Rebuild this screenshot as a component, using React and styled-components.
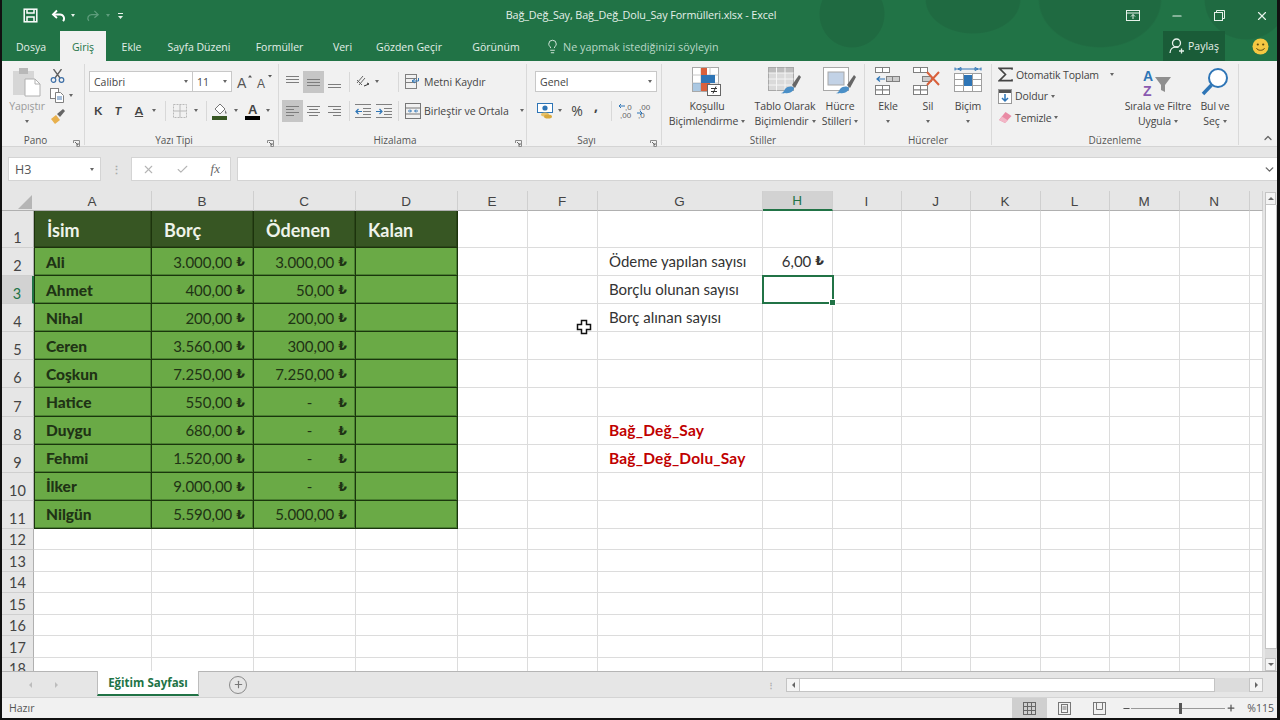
import React from 'react';
import styled, { createGlobalStyle } from 'styled-components';
import { ChevronDown, ChevronUp, Lightbulb, Plus, X, Check, Minus } from 'lucide-react';

const GlobalStyle = createGlobalStyle`
  html, body {
    margin: 0;
    padding: 0;
    width: 1280px;
    height: 720px;
    overflow: hidden;
    background: #000;
  }
`;

const UI_FONT = `'Open Sans', 'Noto Sans', sans-serif`;
const CELL_FONT = `Lato, 'DejaVu Sans', sans-serif`;
const GREEN = '#217346';

const Window = styled.div`
  width: 1280px;
  height: 720px;
  box-sizing: border-box;
  border-left: 2px solid #111;
  border-right: 3px solid #111;
  border-bottom: 2px solid #111;
  background: #e6e6e6;
  display: flex;
  flex-direction: column;
  overflow: hidden;
  font-family: ${UI_FONT};
  font-size: 11px;
  color: #444;
`;

/* title bar + tab strip share the leafy background */
const Head = styled.div`
  background-color: ${GREEN};
  background-image:
    radial-gradient(ellipse 33px 34px at 850px 14px, #1f6a41 97%, transparent 100%),
    radial-gradient(ellipse 48px 34px at 971px 0px, #1f6a41 97%, transparent 100%),
    radial-gradient(ellipse 62px 48px at 1098px 0px, #1f6a41 97%, transparent 100%),
    radial-gradient(ellipse 42px 40px at 1244px 0px, #1f6a41 97%, transparent 100%);
`;

const TitleBar = styled.div`
  height: 31px;
  display: grid;
  grid-template-columns: 1fr auto 1fr;
  align-items: center;
  color: #e4f0e9;
`;

const Qat = styled.div`
  display: flex;
  align-items: center;
  padding-left: 21px;
  gap: 5px;
`;

const TitleText = styled.div`
  font-size: 10.8px;
  letter-spacing: -0.1px;
  padding: 0 0 2px 3px;
`;

const WinControls = styled.div`
  display: flex;
  justify-content: flex-end;
  align-items: center;
  gap: 30px;
  padding-right: 8px;
`;

const TabStrip = styled.div`
  height: 30px;
  display: flex;
  align-items: stretch;
`;

const Tab = styled.div`
  width: ${(p) => p.$w}px;
  display: flex;
  align-items: center;
  justify-content: center;
  white-space: nowrap;
  font-size: 10.5px;
  padding-top: 1px;
  box-sizing: border-box;
  color: ${(p) => (p.$active ? GREEN : '#e2efe8')};
  background: ${(p) => (p.$active ? '#f1f1f1' : 'transparent')};
`;

const TellMe = styled.div`
  display: flex;
  align-items: center;
  gap: 1px;
  margin-left: 4px;
  color: #b9d8c6;
  font-size: 10.8px;
  white-space: nowrap;
  & > svg {
    margin-right: 2px;
  }
`;

const ShareBox = styled.div`
  margin-left: auto;
  width: 62px;
  display: flex;
  align-items: center;
  justify-content: center;
  gap: 3px;
  background: #1a5c38;
  color: #e6f1ea;
  font-size: 10.5px;
`;

const Smile = styled.div`
  width: 52px;
  display: flex;
  align-items: center;
  padding-left: 27px;
  box-sizing: border-box;
`;

const Ribbon = styled.div`
  height: 86px;
  box-sizing: border-box;
  background: #f1f1f1;
  border-bottom: 1px solid #d4d4d4;
  padding-top: 3px;
  display: flex;
  align-items: flex-start;
`;

const Group = styled.div`
  width: ${(p) => p.$w}px;
  height: 81px;
  flex: none;
  box-sizing: border-box;
  border-right: 1px solid #d9d9d9;
  display: flex;
  flex-direction: column;
`;

const GroupBody = styled.div`
  height: 68px;
  display: flex;
  padding-left: ${(p) => p.$pl || 0}px;
`;

const GroupFoot = styled.div`
  height: 13px;
  line-height: 17px;
  font-size: 10px;
  color: #555;
  display: grid;
  grid-template-columns: ${(p) => (p.$launcher ? '1fr auto 1fr 15px' : '1fr auto 1fr')};
`;

const Launcher = styled.svg`
  justify-self: center;
  align-self: center;
  margin-top: 5px;
  width: 7px;
  height: 7px;
`;

const Stack = styled.div`
  display: flex;
  flex-direction: column;
  padding-top: 7px;
  gap: 8px;
`;

const Row = styled.div`
  display: flex;
  align-items: center;
  height: 21px;
`;

const Tool = styled.div`
  width: ${(p) => p.$w}px;
  height: ${(p) => p.$h || 22}px;
  flex: none;
  margin-left: ${(p) => p.$ml || 0}px;
  display: flex;
  align-items: center;
  justify-content: center;
  background: ${(p) => (p.$active ? '#c6c6c6' : 'transparent')};
  color: ${(p) => p.$color || '#444'};
  font-weight: ${(p) => (p.$bold ? 700 : 400)};
  font-style: ${(p) => (p.$italic ? 'italic' : 'normal')};
  font-size: ${(p) => p.$size || 12}px;
  font-family: ${(p) => (p.$cell ? CELL_FONT : UI_FONT)};
  text-decoration: ${(p) => (p.$underline ? 'underline' : 'none')};
`;

const CommaTool = styled(Tool)`
  padding-bottom: 11px;
  box-sizing: border-box;
`;

const Sep = styled.div`
  width: 1px;
  height: 20px;
  flex: none;
  background: #d8d8d8;
  margin: 0 ${(p) => p.$mr ?? 5}px 0 ${(p) => p.$ml ?? 5}px;
`;

const Select = styled.div`
  width: ${(p) => p.$w}px;
  height: 21px;
  flex: none;
  box-sizing: border-box;
  background: #fff;
  border: 1px solid #c8c8c8;
  margin-left: ${(p) => p.$ml ?? 0}px;
  display: flex;
  align-items: center;
  justify-content: space-between;
  padding: 0 4px;
  font-size: 10.5px;
  color: #444;
`;

const Caret = styled.span`
  display: inline-block;
  flex: none;
  width: 0;
  height: 0;
  border-left: 2.5px solid transparent;
  border-right: 2.5px solid transparent;
  border-top: 3px solid ${(p) => p.$color || '#666'};
  margin-left: ${(p) => p.$ml || 0}px;
`;

const TextTool = styled.div`
  display: flex;
  align-items: center;
  gap: 3px;
  white-space: nowrap;
  font-size: 10.5px;
  letter-spacing: -0.02px;
  color: #444;
  margin-left: ${(p) => p.$ml || 0}px;
`;

const Big = styled.div`
  width: ${(p) => p.$w}px;
  flex: none;
  display: flex;
  flex-direction: column;
  align-items: center;
  padding-top: 3px;
  color: ${(p) => p.$color || '#444'};
  font-size: 10.5px;
  letter-spacing: -0.1px;
  white-space: nowrap;
`;

const BigIcon = styled.div`
  height: 32px;
  display: flex;
  align-items: flex-start;
  justify-content: center;
`;

const BigLine = styled.div`
  height: 15px;
  line-height: 15px;
  display: flex;
  align-items: center;
  gap: 3px;
`;

const PasteTools = styled.div`
  display: flex;
  flex-direction: column;
  padding: 3px 0 0 3px;
`;

const SmallIcon = styled.div`
  height: ${(p) => p.$h}px;
  display: flex;
  align-items: center;
  gap: 4px;
`;

const EditList = styled.div`
  width: 122px;
  flex: none;
  display: flex;
  flex-direction: column;
`;

const EditRow = styled.div`
  height: 21.5px;
  display: flex;
  align-items: center;
  gap: 3px;
  font-size: 10.5px;
  letter-spacing: -0.15px;
  white-space: nowrap;
`;

const Collapse = styled.div`
  margin: 68px 0 0 auto;
  padding-right: 3px;
  color: #666;
  display: flex;
`;

const FormulaStrip = styled.div`
  height: 44px;
  box-sizing: border-box;
  padding: 10px 0 10px 6px;
  display: flex;
  align-items: stretch;
`;

const NameBox = styled.div`
  width: 93px;
  box-sizing: border-box;
  background: #fff;
  border: 1px solid #d4d4d4;
  display: flex;
  align-items: center;
  justify-content: space-between;
  padding: 0 6px;
  font-size: 12.5px;
  color: #555;
`;

const Dots = styled.div`
  width: ${(p) => p.$w}px;
  display: flex;
  justify-content: center;
  align-items: center;
  color: #aaa;
  font-size: 11px;
  line-height: 1;
  font-weight: 700;
`;

const FxBox = styled.div`
  width: 100px;
  box-sizing: border-box;
  background: #fff;
  border: 1px solid #d4d4d4;
  display: flex;
  align-items: center;
  justify-content: space-between;
  padding: 0 10px;
  color: #b5b5b5;
`;

const FxText = styled.span`
  font-family: 'Liberation Serif', serif;
  font-style: italic;
  font-size: 13px;
  color: #666;
`;

const FormulaInput = styled.div`
  flex: 1;
  margin-left: 6px;
  background: #fff;
  border: 1px solid #d4d4d4;
  border-right: none;
  display: flex;
  align-items: center;
  justify-content: flex-end;
  padding-right: 1px;
  color: #666;
`;

const SheetArea = styled.div`
  height: 481px;
  display: flex;
  border-bottom: 1px solid #b5b5b5;
  box-sizing: border-box;
`;

const Sheet = styled.div`
  position: relative;
  width: 1261px;
  flex: none;
  display: grid;
  grid-template-columns: 32px 118px 102px 102px 102px 70px 70px 165px 70px 69px 69px 70px 69px 70px 70px 13px;
  grid-template-rows: 20px 37px repeat(10, 28.1px) repeat(7, 21.5px);
  background: #fff;
  overflow: hidden;
`;

const Corner = styled.div`
  background: #e6e6e6;
  display: flex;
  align-items: flex-end;
  justify-content: flex-end;
  padding: 0 2px 1px 0;
  border-bottom: 1px solid #b0b0b0;
`;

const ColHead = styled.div`
  background: ${(p) => (p.$active ? '#d2d2d2' : '#e6e6e6')};
  color: ${(p) => (p.$active ? GREEN : '#444')};
  box-sizing: border-box;
  border-right: 1px solid #cfcfcf;
  border-bottom: ${(p) => (p.$active ? `2px solid ${GREEN}` : '1px solid #b0b0b0')};
  padding: 1px 1px 0 0;
  display: flex;
  align-items: center;
  justify-content: center;
  font-family: 'Liberation Sans', sans-serif;
  font-size: 13.5px;
`;

const RowHead = styled.div`
  background: ${(p) => (p.$active ? '#d2d2d2' : '#e6e6e6')};
  color: ${(p) => (p.$active ? GREEN : '#444')};
  box-sizing: border-box;
  border-right: ${(p) => (p.$active ? `2px solid ${GREEN}` : '1px solid #b0b0b0')};
  border-bottom: 1px solid #cfcfcf;
  display: flex;
  align-items: flex-end;
  justify-content: center;
  font-family: ${CELL_FONT};
  font-size: 14.5px;
  line-height: 19px;
`;

const Cell = styled.div`
  box-sizing: border-box;
  border-right: 1px solid #dcdcdc;
  border-bottom: 1px solid #dcdcdc;
  display: flex;
  align-items: center;
  min-width: 0;
  white-space: nowrap;
  font-family: ${CELL_FONT};
  padding: ${(p) => (p.$right ? '0 8px 2px 0' : p.$red ? '0 0 0 11px' : '0 0 2px 11px')};
  justify-content: ${(p) => (p.$right ? 'flex-end' : 'flex-start')};
  color: ${(p) => (p.$red ? '#c00000' : '#333')};
  font-weight: ${(p) => (p.$red ? 700 : 400)};
  font-size: ${(p) => (p.$red ? 15.5 : 15)}px;
  letter-spacing: ${(p) => (p.$red ? 0.2 : 0)}px;
`;

const TableHead = styled.div`
  box-sizing: border-box;
  background: #375623;
  border-right: 1px solid #1c330c;
  border-bottom: 1px solid #1c330c;
  box-shadow: inset -1px -1px 0 #2b4519;
  border-left: ${(p) => (p.$first ? '1px solid #1c330c' : 'none')};
  display: flex;
  align-items: center;
  padding: 2px 0 0 12px;
  color: #eef3ea;
  font-family: ${CELL_FONT};
  font-weight: 700;
  font-size: 18px;
`;

const TableCell = styled.div`
  box-sizing: border-box;
  background: #6aaa46;
  border-right: 1px solid #1a360c;
  border-bottom: 1px solid #1a360c;
  box-shadow: inset -1px -1px 0 #4a7f31;
  border-left: ${(p) => (p.$first ? '1px solid #1a360c' : 'none')};
  display: flex;
  align-items: center;
  font-family: ${CELL_FONT};
  color: #1f3315;
  padding: ${(p) => (p.$right ? '0 8px 0 0' : '0 0 0 11px')};
  justify-content: ${(p) => (p.$right ? 'flex-end' : 'flex-start')};
  font-weight: ${(p) => (p.$bold ? 900 : 400)};
  font-size: ${(p) => (p.$bold ? 15.5 : 15)}px;
`;

const Dash = styled.span`
  margin-right: 22px;
`;

const Lira = styled.span`
  font-family: 'DejaVu Sans', sans-serif;
  font-size: 12.5px;
  margin-left: 4px;
  font-weight: 700;
`;

const ActiveCell = styled.div`
  box-sizing: border-box;
  border: 2px solid ${GREEN};
  position: relative;
  margin: -1px -1px 0 -1px;
  &::after {
    content: '';
    position: absolute;
    right: -4px;
    bottom: -4px;
    width: 5px;
    height: 5px;
    background: ${GREEN};
    border: 1px solid #fff;
  }
`;

const CursorMark = styled.svg`
  position: absolute;
  left: 574px;
  top: 128px;
  width: 16px;
  height: 16px;
`;

const VScroll = styled.div`
  flex: 1;
  padding: 1px 0 0 2px;
  display: flex;
  flex-direction: column;
`;

const ScrollBtn = styled.div`
  box-sizing: border-box;
  width: ${(p) => p.$w || 11}px;
  height: ${(p) => p.$h || 13}px;
  flex: none;
  margin-left: ${(p) => (p.$end ? 'auto' : '0')};
  background: #f4f4f4;
  border: 1px solid #c4c4c4;
  display: flex;
  align-items: center;
  justify-content: center;
`;

const VThumb = styled.div`
  height: 444px;
  box-sizing: border-box;
  background: #fff;
  border: 1px solid #c4c4c4;
  border-top: none;
`;

const VTrack = styled.div`
  flex: 1;
  background: #dcdcdc;
`;

const Arrow = styled.span`
  width: 0;
  height: 0;
  display: inline-block;
  border-style: solid;
  border-color: transparent;
  border-width: 3px;
  ${(p) => p.$dir === 'up' && `border-bottom-color: ${p.$color || '#666'}; border-top-width: 0;`}
  ${(p) => p.$dir === 'down' && `border-top-color: ${p.$color || '#666'}; border-bottom-width: 0;`}
  ${(p) => p.$dir === 'left' && `border-right-color: ${p.$color || '#666'}; border-left-width: 0;`}
  ${(p) => p.$dir === 'right' && `border-left-color: ${p.$color || '#666'}; border-right-width: 0;`}
`;

const SheetBar = styled.div`
  height: 25px;
  flex: none;
  box-sizing: border-box;
  display: flex;
  align-items: center;
  padding-left: 15px;
  background: #e6e6e6;
`;

const NavBtn = styled.div`
  width: 26px;
  display: flex;
  justify-content: center;
`;

const SheetTab = styled.div`
  width: 102px;
  height: 25px;
  box-sizing: border-box;
  margin: -2px 0 0 28px;
  background: #fff;
  border-left: 1px solid #bdbdbd;
  border-right: 1px solid #bdbdbd;
  border-bottom: 2px solid ${GREEN};
  display: flex;
  align-items: center;
  justify-content: center;
  color: ${GREEN};
  font-family: ${UI_FONT};
  font-weight: 700;
  font-size: 11.5px;
  white-space: nowrap;
`;

const AddSheet = styled.div`
  width: 16px;
  height: 16px;
  margin-left: 30px;
  border: 1px solid #8a8a8a;
  border-radius: 50%;
  color: #777;
  display: flex;
  align-items: center;
  justify-content: center;
`;

const BarDots = styled(Dots)`
  margin-left: auto;
  margin-right: 11px;
  flex-direction: column;
  font-size: 8px;
`;

const HScroll = styled.div`
  width: 477px;
  height: 14px;
  margin-right: 14px;
  display: flex;
  background: #dcdcdc;
`;

const HThumb = styled.div`
  width: 415px;
  box-sizing: border-box;
  background: #fff;
  border-top: 1px solid #c4c4c4;
  border-bottom: 1px solid #c4c4c4;
  border-right: 1px solid #c4c4c4;
`;

const StatusBar = styled.div`
  height: 21px;
  flex: none;
  box-sizing: border-box;
  background: #f1f1f1;
  border-top: 1px solid #d4d4d4;
  display: flex;
  align-items: center;
  padding-left: 7px;
  font-size: 10.5px;
  color: #555;
`;

const StatusRight = styled.div`
  margin-left: auto;
  height: 100%;
  display: flex;
  align-items: center;
`;

const ViewBtn = styled.div`
  width: 35px;
  height: 100%;
  display: flex;
  align-items: center;
  justify-content: center;
  background: ${(p) => (p.$active ? '#cfcfcf' : 'transparent')};
`;

const ZoomBtn = styled.div`
  width: ${(p) => p.$w}px;
  display: flex;
  justify-content: center;
  color: #555;
  margin-left: ${(p) => p.$ml || 0}px;
`;

const SliderLine = styled.div`
  width: 94px;
  height: 1px;
  background: #999;
  position: relative;
`;

const SliderThumb = styled.div`
  position: absolute;
  left: 48px;
  top: -5px;
  width: 3px;
  height: 11px;
  background: #555;
`;

const ZoomValue = styled.div`
  width: 40px;
  padding-right: 3px;
  box-sizing: border-box;
  text-align: right;
  font-size: 10.5px;
  color: #555;
`;

/* ---------- drawn icons ---------- */

const SaveIcon = () => (
  <svg width="15" height="15" viewBox="0 0 15 15" fill="none" stroke="#fff" strokeWidth="1.5">
    <rect x="1.2" y="1.2" width="12.6" height="12.6" />
    <path d="M4 1.5v3.5h7V1.5M4 13.5V9h7v4.5" />
  </svg>
);

const UndoIcon = ({ color = '#fff' }) => (
  <svg width="15" height="14" viewBox="0 0 15 14" fill="none" stroke={color} strokeWidth="1.9">
    <path d="M6 1.5 2 5.5l4 3.5" />
    <path d="M2.5 5.5h6.5a4 4 0 0 1 3 6.7" />
  </svg>
);

const RedoIcon = ({ color = '#5e9d7c' }) => (
  <svg width="14" height="14" viewBox="0 0 15 14" fill="none" stroke={color} strokeWidth="1.4">
    <path d="M9 1.5 13 5.5 9 9" />
    <path d="M12.5 5.5H6a4 4 0 0 0-3 6.7" />
  </svg>
);

const CustomizeIcon = () => (
  <svg width="7" height="8" viewBox="0 0 7 8" fill="#e6f1ea" style={{ marginLeft: 2 }}>
    <rect x="1" y="1" width="5" height="1" />
    <path d="M1 4h5L3.500 7z" />
  </svg>
);

const RibbonModeIcon = () => (
  <svg width="14" height="11" viewBox="0 0 14 11" fill="none" stroke="#e6f1ea">
    <rect x=".5" y=".5" width="13" height="10" />
    <path d="M.5 3h13" />
    <path d="M7 9V4.500M5 6.500l2-2 2 2" />
  </svg>
);

const RestoreIcon = () => (
  <svg width="11" height="11" viewBox="0 0 11 11" fill="none" stroke="#e6f1ea">
    <rect x=".5" y="2.500" width="8" height="8" />
    <path d="M2.500 2.500v-2h8v8h-2" />
  </svg>
);

const ShareIcon = () => (
  <svg width="16" height="16" viewBox="0 0 16 16" fill="none" stroke="#e6f1ea" strokeWidth="1.300">
    <circle cx="7.500" cy="5" r="4" />
    <path d="M1 15c0-3.500 2.500-6 6-6 1 0 1.800.2 2.500.5" />
    <path d="M12.500 10.500v5M10 13h5" />
  </svg>
);

const SmileIcon = () => (
  <svg width="17" height="17" viewBox="0 0 17 17">
    <circle cx="8.500" cy="8.500" r="8" fill="#f5c842" />
    <circle cx="5.800" cy="6.500" r="1.100" fill="#5d4a10" />
    <circle cx="11.200" cy="6.500" r="1.100" fill="#5d4a10" />
    <path d="M4.500 10.200c1.200 2.800 6.800 2.800 8 0" fill="none" stroke="#5d4a10" strokeWidth="1" />
  </svg>
);

const LauncherIcon = () => (
  <Launcher viewBox="0 0 7 7" fill="none" stroke="#8a8a8a">
    <path d="M.5 3V.5H6.500V6.500H3.500" />
    <path d="M2 2 5 5M5 3v2H3" stroke="#6a6a6a" />
  </Launcher>
);

const ClipboardIcon = () => (
  <svg width="30" height="30" viewBox="0 0 30 30">
    <rect x="1" y="4" width="21" height="24" fill="#d6d6d6" />
    <rect x="7" y="1" width="9" height="6" fill="#b8b8b8" />
    <path d="M13 12h10l5 5v12H13z" fill="#fff" stroke="#b0b0b0" />
    <path d="M23 12v5h5" fill="none" stroke="#b0b0b0" />
  </svg>
);

const ScissorsIcon = () => (
  <svg width="15" height="14" viewBox="0 0 15 14" fill="none">
    <path d="M3.500 0 10 9M11.500 0 5 9" stroke="#606060" strokeWidth="1.300" />
    <circle cx="3.500" cy="11" r="2.300" stroke="#3c6ea6" strokeWidth="1.200" />
    <circle cx="11.500" cy="11" r="2.300" stroke="#3c6ea6" strokeWidth="1.200" />
  </svg>
);

const CopyIcon = () => (
  <svg width="15" height="15" viewBox="0 0 15 15" fill="#fff" stroke="#808080">
    <rect x=".5" y=".5" width="8" height="10" />
    <path d="M5.500 4.500h5l3 3v7h-8z" />
    <path d="M7 9h5M7 11h5" stroke="#4a7cb5" />
  </svg>
);

const PainterIcon = () => (
  <svg width="17" height="15" viewBox="0 0 17 15">
    <path d="M1 10l5-4 4 5-5 4z" fill="#e8b04c" />
    <path d="M7 5l3 3 5-6-2-2z" fill="#666" />
  </svg>
);

const GrowIcon = ({ up }) => (
  <svg width="17" height="17" viewBox="0 0 17 17">
    <text x="1" y="15" fontFamily="Liberation Sans" fontSize={up ? 14 : 12} fill="#555">A</text>
    <path d={up ? 'M12 4.500 14 2l2 2.500z' : 'M12 2h4l-2 2.500z'} fill="#555" />
  </svg>
);

const BordersIcon = () => (
  <svg width="14" height="14" viewBox="0 0 14 14" fill="none" stroke="#b9b9b9">
    <rect x=".5" y=".5" width="13" height="13" strokeDasharray="2 1" />
    <path d="M7 .5v13M.5 7h13" />
  </svg>
);

const FillIcon = () => (
  <svg width="16" height="18" viewBox="0 0 16 18">
    <path d="M3 7 8 2l5 5-5 5z" fill="#fff" stroke="#777" />
    <path d="M13 8c1 1.500 2 2.400 1.500 3.400-.5.6-1.500.3-1.500-.7z" fill="#777" />
    <rect x="0" y="14" width="15" height="4" fill="#375623" />
  </svg>
);

const FontColorIcon = () => (
  <svg width="16" height="18" viewBox="0 0 16 18">
    <text x="3" y="12" fontFamily="Liberation Sans" fontWeight="700" fontSize="13" fill="#444">A</text>
    <rect x="0" y="14" width="15" height="4" fill="#000" />
  </svg>
);

const lineSets = {
  top: [[0, 13, 3], [0, 13, 6], [0, 13, 9]],
  mid: [[0, 13, 6], [0, 13, 9], [0, 13, 12]],
  bot: [[0, 13, 11], [0, 13, 14]],
  left: [[0, 13, 4], [0, 8, 7], [0, 13, 10], [0, 8, 13]],
  center: [[0, 13, 4], [2, 11, 7], [0, 13, 10], [2, 11, 13]],
  right: [[0, 13, 4], [5, 13, 7], [0, 13, 10], [5, 13, 13]],
};

const LinesIcon = ({ set }) => (
  <svg width="13" height="18" viewBox="0 0 13 18" stroke="#7d7d7d">
    {lineSets[set].map(([a, b, y], i) => (
      <path key={i} d={`M${a} ${y + 0.5}H${b}`} />
    ))}
  </svg>
);

const OrientIcon = () => (
  <svg width="16" height="15" viewBox="0 0 16 15" fill="none" stroke="#666">
    <path d="M2 9 8 2M4 11 10 4M2 6l5 5" />
    <path d="M9 12l5-2-2-1" stroke="#333" />
  </svg>
);

const IndentIcon = ({ right }) => (
  <svg width="16" height="14" viewBox="0 0 16 14" stroke="#808080">
    <path d="M0 .5h16M0 13.500h16M8 4.500h8M8 7.500h8M8 10.500h8" />
    <path d={right ? 'M0 7.500h5M3.500 5l2.500 2.500L3.500 10' : 'M1 7.500h6M3.500 5 1 7.500 3.500 10'} stroke="#2e75b6" strokeWidth="1.200" fill="none" />
  </svg>
);

const WrapIcon = () => (
  <svg width="16" height="15" viewBox="0 0 16 15" fill="none" stroke="#808080">
    <rect x=".5" y=".5" width="11" height="14" />
    <path d="M.5 4.500h11M.5 8.500h11" />
    <path d="M7 7h6.500v-3M10 5 7 7l3 2" stroke="#2e75b6" />
  </svg>
);

const MergeIcon = () => (
  <svg width="16" height="16" viewBox="0 0 16 16" fill="none" stroke="#777">
    <rect x=".5" y=".5" width="15" height="15" />
    <path d="M.5 5h15M.5 11h15" />
    <path d="M3 8h3M10 8h3M5 6.500 6.500 8 5 9.500M11 6.500 9.500 8 11 9.500" stroke="#2e75b6" />
  </svg>
);

const MoneyIcon = () => (
  <svg width="17" height="16" viewBox="0 0 17 16">
    <rect x=".5" y=".5" width="15" height="9" fill="#fff" stroke="#2e75b6" />
    <circle cx="8" cy="5" r="2.600" fill="#2e75b6" />
    <ellipse cx="8" cy="11.500" rx="4" ry="2" fill="#e8c26a" />
    <ellipse cx="11" cy="13.500" rx="4" ry="2" fill="#d9a93e" />
  </svg>
);

const DecimalIcon = ({ top, bottom, flip }) => (
  <svg width="17" height="17" viewBox="0 0 17 17">
    <text x={flip ? 3 : 7} y="8" fontFamily="Liberation Sans" fontSize="8" fill="#666">{top}</text>
    <text x="2" y="16" fontFamily="Liberation Sans" fontSize="8" fill="#666">{bottom}</text>
    <path d={flip ? 'M1 11h5M4 9l2 2-2 2' : 'M7 4H1M3 2 1 4l2 2'} stroke="#2e75b6" fill="none" />
  </svg>
);

const CondIcon = () => (
  <svg width="30" height="30" viewBox="0 0 30 30">
    <rect x=".5" y=".5" width="26" height="24" fill="#fff" stroke="#a8a8a8" />
    <path d="M.5 8h26M.5 16h26M9 .5v24M18 .5v24" stroke="#c8c8c8" />
    <rect x="9" y="1" width="6" height="7" fill="#d9603b" />
    <rect x="9" y="8" width="14" height="8" fill="#2e75b6" />
    <rect x="9" y="16" width="9" height="8" fill="#d9603b" />
    <rect x="1" y="16" width="8" height="8" fill="#2e75b6" opacity=".4" />
    <rect x="15.500" y="17.500" width="13" height="11" fill="#fff" stroke="#666" />
    <path d="M19 21.500h6M19 24.500h6M24 19.500l-3 7" stroke="#333" fill="none" />
  </svg>
);

const BrushTip = () => (
  <>
    <path d="M24 18 31 8l2 2-6 11z" fill="#666" />
    <path d="M17 22c3-3 7-3 9-1 0 3-4 6-9 5-2 1-4 0-4 0 2 0 3-2 4-4z" fill="#4a8fc7" />
  </>
);

const TableStyleIcon = () => (
  <svg width="34" height="30" viewBox="0 0 34 30">
    <rect x=".5" y=".5" width="25" height="23" fill="#fff" stroke="#a8a8a8" />
    <rect x="1" y="1" width="24" height="5" fill="#bdbdbd" />
    <rect x="1" y="6" width="24" height="17" fill="#dadada" />
    <path d="M.5 6h25M.5 12h25M.5 18h25M8.500 .5v23M17 .5v23" stroke="#f5f5f5" />
    <BrushTip />
  </svg>
);

const CellStyleIcon = () => (
  <svg width="34" height="30" viewBox="0 0 34 30">
    <rect x=".5" y=".5" width="25" height="23" fill="#fff" stroke="#a8a8a8" />
    <rect x="5" y="5" width="16" height="13" fill="#c2d2e6" stroke="#a8a8a8" />
    <BrushTip />
  </svg>
);

const InsertIcon = () => (
  <svg width="26" height="28" viewBox="0 0 26 28" fill="#fff" stroke="#808080">
    <rect x=".5" y=".5" width="7" height="5" />
    <rect x="7.500" y=".5" width="7" height="5" />
    <rect x="11.500" y="9.500" width="6" height="5" fill="#ccc" />
    <rect x="17.500" y="9.500" width="7" height="5" fill="#ccc" />
    <rect x=".5" y="18.500" width="7" height="4.500" />
    <rect x="7.500" y="18.500" width="7" height="4.500" />
    <rect x=".5" y="23" width="7" height="4.500" />
    <rect x="7.500" y="23" width="7" height="4.500" />
    <path d="M10 12H2M5 9.500 2 12l3 2.500" stroke="#2e75b6" strokeWidth="1.200" fill="none" />
  </svg>
);

const DeleteIcon = () => (
  <svg width="30" height="28" viewBox="0 0 30 28" fill="#fff" stroke="#808080">
    <rect x=".5" y=".5" width="7" height="5" />
    <rect x="7.500" y=".5" width="7" height="5" />
    <rect x="9.500" y="9.500" width="9" height="5" fill="#ccc" />
    <rect x=".5" y="18.500" width="7" height="4.500" />
    <rect x="7.500" y="18.500" width="7" height="4.500" />
    <rect x=".5" y="23" width="7" height="4.500" />
    <rect x="7.500" y="23" width="7" height="4.500" />
    <path d="M14 5 26 18M26 5 14 18" stroke="#d9603b" strokeWidth="2" />
  </svg>
);

const FormatIcon = () => (
  <svg width="28" height="28" viewBox="0 0 28 28" fill="none" stroke="#a0a0a0">
    <path d="M1 2h26M1 .5v3M27 .5v3M4 2l3-1.500v3zM24 2l-3-1.500v3z" stroke="#2e75b6" />
    <rect x=".5" y="6.500" width="27" height="18" fill="#fff" />
    <path d="M9.500 6.500v18M18.500 6.500v18M.5 12.500h27M.5 18.500h27" />
    <rect x="10" y="8" width="8" height="11" fill="#2e75b6" stroke="none" />
  </svg>
);

const SigmaIcon = () => (
  <svg width="15" height="15" viewBox="0 0 16 15" fill="none" stroke="#444" strokeWidth="1.700">
    <path d="M15 2.500V1H1.500L8 7.500 1.500 14H15v-1.500" />
  </svg>
);

const FillDownIcon = () => (
  <svg width="14" height="15" viewBox="0 0 14 15">
    <rect x=".5" y=".5" width="13" height="14" fill="#fff" stroke="#999" />
    <rect x="1" y="1" width="12" height="3" fill="#555" />
    <path d="M7 5v7M4 9l3 3 3-3" stroke="#2e75b6" strokeWidth="1.500" fill="none" />
  </svg>
);

const EraserIcon = () => (
  <svg width="14" height="13" viewBox="0 0 14 13">
    <path d="M7.500 1 13.500 5 7 12 1 9z" fill="#e98aa4" />
    <path d="M1 9l3-3.500L10 9.500 7 12z" fill="#f2b6c6" />
  </svg>
);

const SortIcon = () => (
  <svg width="32" height="32" viewBox="0 0 32 32">
    <text x="1" y="14" fontFamily="Liberation Sans" fontWeight="700" fontSize="14" fill="#2e75b6">A</text>
    <text x="1" y="29" fontFamily="Liberation Sans" fontWeight="700" fontSize="14" fill="#8a5ab0">Z</text>
    <path d="M13 10h16l-6 8v7l-4-2v-5z" fill="#8f8f8f" />
  </svg>
);

const FindIcon = () => (
  <svg width="28" height="32" viewBox="0 0 28 32" fill="none">
    <circle cx="17" cy="11" r="9" fill="#fff" stroke="#2e75b6" strokeWidth="2" />
    <path d="M10.500 18 2 27" stroke="#2e75b6" strokeWidth="3.500" />
  </svg>
);

const GridViewIcon = () => (
  <svg width="13" height="13" viewBox="0 0 13 13" fill="none" stroke="#666">
    <rect x=".5" y=".5" width="12" height="12" />
    <path d="M4.500 .5v12M8.500 .5v12M.5 4.500h12M.5 8.500h12" />
  </svg>
);

const PageViewIcon = () => (
  <svg width="13" height="13" viewBox="0 0 13 13" fill="none" stroke="#777">
    <rect x=".5" y=".5" width="12" height="12" />
    <rect x="3.500" y="2.500" width="6" height="8" />
    <path d="M4.500 5h4M4.500 7h4" />
  </svg>
);

const BreakViewIcon = () => (
  <svg width="13" height="13" viewBox="0 0 13 13" fill="none" stroke="#777">
    <rect x=".5" y=".5" width="12" height="12" />
    <path d="M3.500 .5v7h6v-7" />
  </svg>
);

/* ---------- data ---------- */

const COLUMNS = ['A', 'B', 'C', 'D', 'E', 'F', 'G', 'H', 'I', 'J', 'K', 'L', 'M', 'N', ''];
const TABLE_COLS = ['A', 'B', 'C', 'D'];
const TABLE_HEAD = ['İsim', 'Borç', 'Ödenen', 'Kalan'];

const people = [
  ['Ali', '3.000,00', '3.000,00'],
  ['Ahmet', '400,00', '50,00'],
  ['Nihal', '200,00', '200,00'],
  ['Ceren', '3.560,00', '300,00'],
  ['Coşkun', '7.250,00', '7.250,00'],
  ['Hatice', '550,00', null],
  ['Duygu', '680,00', null],
  ['Fehmi', '1.520,00', null],
  ['İlker', '9.000,00', null],
  ['Nilgün', '5.590,00', '5.000,00'],
];

const notes = {
  2: { text: 'Ödeme yapılan sayısı' },
  3: { text: 'Borçlu olunan sayısı' },
  4: { text: 'Borç alınan sayısı' },
  8: { text: 'Bağ_Değ_Say', red: true },
  9: { text: 'Bağ_Değ_Dolu_Say', red: true },
};

const Money = ({ value }) => (
  <>
    {value === null ? <Dash>-</Dash> : value}
    <Lira>₺</Lira>
  </>
);

const tableCell = (rowNo, col, i) => {
  if (rowNo === 1) {
    return <TableHead key={col} $first={i === 0}>{TABLE_HEAD[i]}</TableHead>;
  }
  const person = people[rowNo - 2];
  if (col === 'A') return <TableCell key={col} $first $bold>{person[0]}</TableCell>;
  if (col === 'D') return <TableCell key={col} />;
  return (
    <TableCell key={col} $right>
      <Money value={person[i]} />
    </TableCell>
  );
};

const plainCell = (rowNo, col) => {
  const note = notes[rowNo];
  if (col === 'G' && note) return <Cell key={col} $red={note.red}>{note.text}</Cell>;
  if (col === 'H' && rowNo === 2) return <Cell key={col} $right><Money value="6,00" /></Cell>;
  if (col === 'H' && rowNo === 3) return <ActiveCell key={col} />;
  return <Cell key={col} />;
};

const rowNumbers = Array.from({ length: 18 }, (_, i) => i + 1);

const Foot = ({ children, launcher }) => (
  <GroupFoot $launcher={launcher}>
    <span />
    <span>{children}</span>
    <span />
    {launcher && <LauncherIcon />}
  </GroupFoot>
);

const BigButton = ({ w, icon, lines, caret, color }) => (
  <Big $w={w} $color={color}>
    <BigIcon>{icon}</BigIcon>
    {lines.map((line, i) => (
      <BigLine key={line}>
        {line}
        {caret === 'inline' && i === lines.length - 1 && <Caret />}
      </BigLine>
    ))}
    {caret === 'below' && <BigLine><Caret /></BigLine>}
  </Big>
);

const App = () => (
  <Window>
    <GlobalStyle />
    <Head>
      <TitleBar>
        <Qat>
          <SaveIcon />
          <Tool $w={16} $h={16} $ml={7}><UndoIcon /></Tool>
          <Caret $color="#e6f1ea" />
          <Tool $w={16} $h={16} $ml={5}><RedoIcon /></Tool>
          <Caret $color="#5e9d7c" />
          <CustomizeIcon />
        </Qat>
        <TitleText>Bağ_Değ_Say, Bağ_Değ_Dolu_Say Formülleri.xlsx - Excel</TitleText>
        <WinControls>
          <RibbonModeIcon />
          <Minus size={14} color="#e6f1ea" />
          <RestoreIcon />
          <X size={14} color="#e6f1ea" />
        </WinControls>
      </TitleBar>
      <TabStrip>
        <Tab $w={58}>Dosya</Tab>
        <Tab $w={46} $active>Giriş</Tab>
        <Tab $w={51}>Ekle</Tab>
        <Tab $w={84}>Sayfa Düzeni</Tab>
        <Tab $w={77}>Formüller</Tab>
        <Tab $w={49}>Veri</Tab>
        <Tab $w={84}>Gözden Geçir</Tab>
        <Tab $w={90}>Görünüm</Tab>
        <TellMe>
          <Lightbulb size={15} color="#dcebe2" strokeWidth={1.5} />
          Ne yapmak istediğinizi söyleyin
        </TellMe>
        <ShareBox>
          <ShareIcon />
          Paylaş
        </ShareBox>
        <Smile><SmileIcon /></Smile>
      </TabStrip>
    </Head>

    <Ribbon>
      <Group $w={83}>
        <GroupBody $pl={5}>
          <BigButton w={40} icon={<ClipboardIcon />} lines={['Yapıştır']} caret="below" color="#9a9a9a" />
          <PasteTools>
            <SmallIcon $h={17}><ScissorsIcon /></SmallIcon>
            <SmallIcon $h={22}><CopyIcon /><Caret /></SmallIcon>
            <SmallIcon $h={20}><PainterIcon /></SmallIcon>
          </PasteTools>
        </GroupBody>
        <Foot launcher>Pano</Foot>
      </Group>

      <Group $w={194}>
        <GroupBody $pl={4}>
          <Stack>
            <Row>
              <Select $w={104}>Calibri<Caret /></Select>
              <Select $w={40} $ml={-1}>11<Caret /></Select>
              <Tool $w={17} $ml={4}><GrowIcon up /></Tool>
              <Tool $w={17} $ml={3}><GrowIcon /></Tool>
            </Row>
            <Row>
              <Tool $w={18} $bold $cell>K</Tool>
              <Tool $w={22} $bold $italic $cell>T</Tool>
              <Tool $w={20} $bold $cell $underline>A</Tool>
              <Tool $w={10}><Caret /></Tool>
              <Sep $ml={6} $mr={6} />
              <Tool $w={16}><BordersIcon /></Tool>
              <Tool $w={16}><Caret /></Tool>
              <Sep $ml={2} $mr={5} />
              <Tool $w={16}><FillIcon /></Tool>
              <Tool $w={16}><Caret /></Tool>
              <Tool $w={18}><FontColorIcon /></Tool>
              <Tool $w={12}><Caret /></Tool>
            </Row>
          </Stack>
        </GroupBody>
        <Foot launcher>Yazı Tipi</Foot>
      </Group>

      <Group $w={248}>
        <GroupBody $pl={3}>
          <Stack>
            <Row>
              <Tool $w={21}><LinesIcon set="top" /></Tool>
              <Tool $w={21} $active><LinesIcon set="mid" /></Tool>
              <Tool $w={21}><LinesIcon set="bot" /></Tool>
              <Sep $ml={4} $mr={5} />
              <Tool $w={16}><OrientIcon /></Tool>
              <Tool $w={12}><Caret /></Tool>
              <Sep $ml={15} $mr={6} />
              <TextTool><WrapIcon />Metni Kaydır</TextTool>
            </Row>
            <Row>
              <Tool $w={21} $active><LinesIcon set="left" /></Tool>
              <Tool $w={21}><LinesIcon set="center" /></Tool>
              <Tool $w={21}><LinesIcon set="right" /></Tool>
              <Sep $ml={4} $mr={5} />
              <Tool $w={16}><IndentIcon /></Tool>
              <Tool $w={16} $ml={5}><IndentIcon right /></Tool>
              <Sep $ml={6} $mr={6} />
              <TextTool><MergeIcon />Birleştir ve Ortala<Caret $ml={8} /></TextTool>
            </Row>
          </Stack>
        </GroupBody>
        <Foot launcher>Hizalama</Foot>
      </Group>

      <Group $w={135}>
        <GroupBody $pl={8}>
          <Stack>
            <Row><Select $w={122}>Genel<Caret /></Select></Row>
            <Row>
              <Tool $w={20}><MoneyIcon /></Tool>
              <Tool $w={10}><Caret /></Tool>
              <Tool $w={20} $ml={2} $size={14}>%</Tool>
              <CommaTool $w={18} $bold $size={14}>,</CommaTool>
              <Sep $ml={6} $mr={6} />
              <Tool $w={17}><DecimalIcon top=",0" bottom=",00" /></Tool>
              <Tool $w={19}><DecimalIcon top=",00" bottom=",0" flip /></Tool>
            </Row>
          </Stack>
        </GroupBody>
        <Foot launcher>Sayı</Foot>
      </Group>

      <Group $w={203}>
        <GroupBody>
          <BigButton w={90} icon={<CondIcon />} lines={['Koşullu', 'Biçimlendirme']} caret="inline" />
          <BigButton w={66} icon={<TableStyleIcon />} lines={['Tablo Olarak', 'Biçimlendir']} caret="inline" />
          <BigButton w={44} icon={<CellStyleIcon />} lines={['Hücre', 'Stilleri']} caret="inline" />
        </GroupBody>
        <Foot>Stiller</Foot>
      </Group>

      <Group $w={127}>
        <GroupBody $pl={3}>
          <BigButton w={40} icon={<InsertIcon />} lines={['Ekle']} caret="below" />
          <BigButton w={40} icon={<DeleteIcon />} lines={['Sil']} caret="below" />
          <BigButton w={40} icon={<FormatIcon />} lines={['Biçim']} caret="below" />
        </GroupBody>
        <Foot>Hücreler</Foot>
      </Group>

      <Group $w={247}>
        <GroupBody $pl={6}>
          <EditList>
            <EditRow><SigmaIcon />Otomatik Toplam<Caret $ml={8} /></EditRow>
            <EditRow><FillDownIcon />Doldur<Caret /></EditRow>
            <EditRow><EraserIcon />Temizle<Caret /></EditRow>
          </EditList>
          <BigButton w={76} icon={<SortIcon />} lines={['Sırala ve Filtre', 'Uygula']} caret="inline" />
          <BigButton w={38} icon={<FindIcon />} lines={['Bul ve', 'Seç']} caret="inline" />
        </GroupBody>
        <Foot>Düzenleme</Foot>
      </Group>

      <Collapse><ChevronUp size={12} strokeWidth={2.5} /></Collapse>
    </Ribbon>

    <FormulaStrip>
      <NameBox>H3<Caret /></NameBox>
      <Dots $w={30}>⋮</Dots>
      <FxBox>
        <X size={13} />
        <Check size={13} />
        <FxText>fx</FxText>
      </FxBox>
      <FormulaInput><ChevronDown size={13} strokeWidth={2.5} /></FormulaInput>
    </FormulaStrip>

    <SheetArea>
      <Sheet>
        <Corner>
          <svg width="14" height="14" viewBox="0 0 14 14"><path d="M14 0v14H0z" fill="#b5b5b5" /></svg>
        </Corner>
        {COLUMNS.map((col) => (
          <ColHead key={col} $active={col === 'H'}>{col}</ColHead>
        ))}
        {rowNumbers.map((rowNo) => (
          <React.Fragment key={rowNo}>
            <RowHead $active={rowNo === 3}>{rowNo}</RowHead>
            {COLUMNS.map((col, i) =>
              rowNo <= 11 && TABLE_COLS.includes(col)
                ? tableCell(rowNo, col, i)
                : plainCell(rowNo, col || 'O')
            )}
          </React.Fragment>
        ))}
        <CursorMark viewBox="0 0 16 16">
          <path d="M5.500 1.500h5v4h4v5h-4v4h-5v-4h-4v-5h4z" fill="#fff" stroke="#111" strokeWidth="1.500" />
        </CursorMark>
      </Sheet>
      <VScroll>
        <ScrollBtn><Arrow $dir="up" /></ScrollBtn>
        <VThumb />
        <VTrack />
        <ScrollBtn><Arrow $dir="down" /></ScrollBtn>
      </VScroll>
    </SheetArea>

    <SheetBar>
      <NavBtn><Arrow $dir="left" $color="#bdbdbd" /></NavBtn>
      <NavBtn><Arrow $dir="right" $color="#bdbdbd" /></NavBtn>
      <SheetTab>Eğitim Sayfası</SheetTab>
      <AddSheet><Plus size={11} strokeWidth={2.5} /></AddSheet>
      <BarDots $w={8}>⋮</BarDots>
      <HScroll>
        <ScrollBtn $w={14} $h={14}><Arrow $dir="left" /></ScrollBtn>
        <HThumb />
        <ScrollBtn $w={14} $h={14} $end><Arrow $dir="right" /></ScrollBtn>
      </HScroll>
    </SheetBar>

    <StatusBar>
      Hazır
      <StatusRight>
        <ViewBtn $active><GridViewIcon /></ViewBtn>
        <ViewBtn><PageViewIcon /></ViewBtn>
        <ViewBtn><BreakViewIcon /></ViewBtn>
        <ZoomBtn $w={10} $ml={4}><Minus size={9} strokeWidth={3} /></ZoomBtn>
        <SliderLine><SliderThumb /></SliderLine>
        <ZoomBtn $w={12}><Plus size={10} strokeWidth={3} /></ZoomBtn>
        <ZoomValue>%115</ZoomValue>
      </StatusRight>
    </StatusBar>
  </Window>
);

export default App;
